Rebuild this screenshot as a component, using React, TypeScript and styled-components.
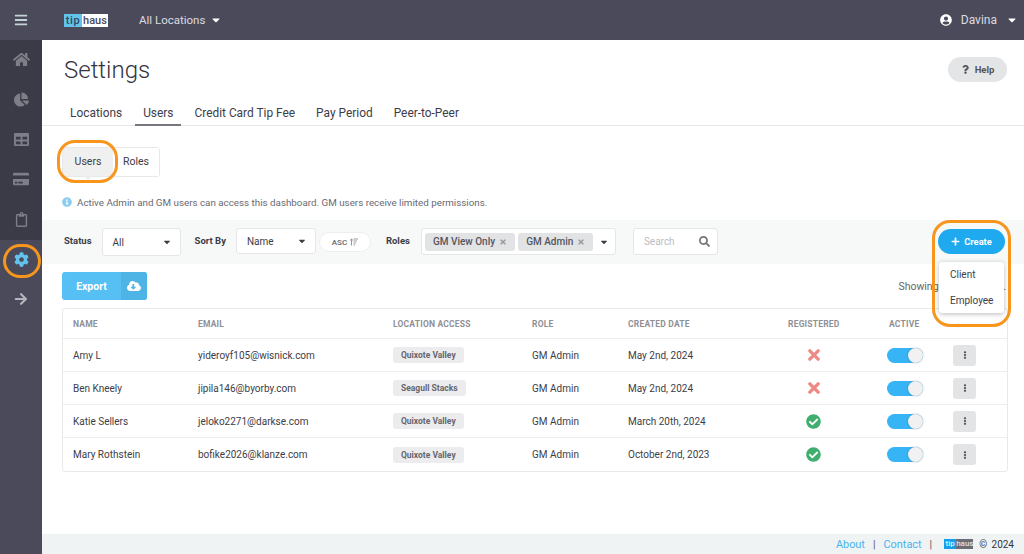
import React from "react";
import styled, { createGlobalStyle } from "styled-components";
import {
  FaArrowRight,
  FaBars,
  FaCaretDown,
  FaChartPie,
  FaCheckCircle,
  FaCloudDownloadAlt,
  FaCog,
  FaCreditCard,
  FaEllipsisV,
  FaHome,
  FaInfoCircle,
  FaPlus,
  FaQuestion,
  FaRegClipboard,
  FaSearch,
  FaSortAmountUp,
  FaTable,
  FaTimes,
  FaUserCircle,
} from "react-icons/fa";

const users = [
  { name: "Amy L", email: "yideroyf105@wisnick.com", location: "Quixote Valley", created: "May 2nd, 2024", registered: false },
  { name: "Ben Kneely", email: "jipila146@byorby.com", location: "Seagull Stacks", created: "May 2nd, 2024", registered: false },
  { name: "Katie Sellers", email: "jeloko2271@darkse.com", location: "Quixote Valley", created: "March 20th, 2024", registered: true },
  { name: "Mary Rothstein", email: "bofike2026@klanze.com", location: "Quixote Valley", created: "October 2nd, 2023", registered: true },
];

const tabs = ["Locations", "Users", "Credit Card Tip Fee", "Pay Period", "Peer-to-Peer"];

const CrossIcon = () => (
  <svg width="12" height="12" viewBox="0 0 13 13">
    <path d="M2 2 L11 11 M11 2 L2 11" stroke="#ee8a84" strokeWidth="3.6" strokeLinecap="round" />
  </svg>
);

export default function App() {
  return (
    <Page>
      <GlobalStyle />
      <TopBar>
        <MenuCell>
          <FaBars size={14} />
        </MenuCell>
        <Logo>
          <LogoTip>tip</LogoTip>
          <LogoHaus>haus</LogoHaus>
        </Logo>
        <LocationPicker>
          All Locations
          <FaCaretDown size={12} color="#fff" />
        </LocationPicker>
        <UserMenu>
          <FaUserCircle size={12} color="#fff" />
          <span>Davina</span>
          <FaCaretDown size={12} color="#fff" />
        </UserMenu>
      </TopBar>
      <Body>
        <Sidebar>
          <NavGroup>
            <NavItem><FaHome size={17} /></NavItem>
            <NavItem><FaChartPie size={15} /></NavItem>
            <NavItem><FaTable size={15} /></NavItem>
            <NavItem><FaCreditCard size={16} /></NavItem>
            <NavItem><FaRegClipboard size={15} /></NavItem>
          </NavGroup>
          <NavItem $active>
            <FaCog size={15} />
            <Highlight $top={4} $right={1} $bottom={2} $left={3} $radius={19} />
          </NavItem>
          <NavItem $bright><FaArrowRight size={14} /></NavItem>
        </Sidebar>
        <Main>
          <Header>
            <Title>Settings</Title>
            <HelpButton>
              <FaQuestion size={9} />
              Help
            </HelpButton>
          </Header>
          <Tabs>
            {tabs.map((tab) => (
              <Tab key={tab} $active={tab === "Users"}>{tab}</Tab>
            ))}
          </Tabs>
          <SubTabs>
            <SubTab $active>
              Users
              <Highlight $top={-8} $right={-5} $bottom={-7} $left={-6} $radius={18} />
            </SubTab>
            <SubTab>Roles</SubTab>
          </SubTabs>
          <InfoLine>
            <FaInfoCircle size={10} color="#8ccdf0" />
            Active Admin and GM users can access this dashboard. GM users receive limited permissions.
          </InfoLine>
          <FilterBar>
            <FilterLabel>Status</FilterLabel>
            <Select $width={79} $height={28} $ml={10}>
              All
              <FaCaretDown size={10} />
            </Select>
            <FilterLabel $ml={14}>Sort By</FilterLabel>
            <Select $width={80} $height={26} $ml={10}>
              Name
              <FaCaretDown size={10} />
            </Select>
            <SortPill>
              ASC
              <FaSortAmountUp size={8} color="#999" />
            </SortPill>
            <FilterLabel $ml={15}>Roles</FilterLabel>
            <RolesBox>
              <RoleChip>GM View Only <FaTimes size={8} color="#999" /></RoleChip>
              <RoleChip>GM Admin <FaTimes size={8} color="#999" /></RoleChip>
              <RolesCaret><FaCaretDown size={10} /></RolesCaret>
            </RolesBox>
            <SearchBox>
              Search
              <FaSearch size={11} color="#777" />
            </SearchBox>
            <CreateWrap>
              <CreateButton>
                <FaPlus size={9} />
                Create
              </CreateButton>
              <CreateMenu>
                <CreateOption>Client</CreateOption>
                <CreateOption>Employee</CreateOption>
              </CreateMenu>
              <Highlight $top={-9} $right={-6} $bottom={-73} $left={-6} $radius={18} />
            </CreateWrap>
          </FilterBar>
          <ExportRow>
            <ExportButton>
              <ExportLabel>Export</ExportLabel>
              <ExportIcon><FaCloudDownloadAlt size={14} /></ExportIcon>
            </ExportButton>
            <Showing>Showing 1 to 4 of 4.</Showing>
          </ExportRow>
          <Table>
            <HeadRow>
              <span>NAME</span>
              <span>EMAIL</span>
              <span>LOCATION ACCESS</span>
              <span>ROLE</span>
              <span>CREATED DATE</span>
              <span>REGISTERED</span>
              <span>ACTIVE</span>
            </HeadRow>
            {users.map((user) => (
              <Row key={user.email}>
                <span>{user.name}</span>
                <span>{user.email}</span>
                <span><LocationChip>{user.location}</LocationChip></span>
                <span>GM Admin</span>
                <span>{user.created}</span>
                <StatusCell>
                  {user.registered ? <FaCheckCircle size={15} color="#3fae6f" /> : <CrossIcon />}
                </StatusCell>
                <Toggle />
                <KebabButton><FaEllipsisV size={8} /></KebabButton>
              </Row>
            ))}
          </Table>
          <Footer>
            <FooterLink>About</FooterLink>
            <FooterBar>|</FooterBar>
            <FooterLink>Contact</FooterLink>
            <FooterBar>|</FooterBar>
            <FooterLogo>
              <FooterTip>tip</FooterTip>
              <FooterHaus>haus</FooterHaus>
            </FooterLogo>
            <Copyright>© 2024</Copyright>
          </Footer>
        </Main>
      </Body>
    </Page>
  );
}

const GlobalStyle = createGlobalStyle`
  html, body {
    margin: 0;
    padding: 0;
    background: #fff;
  }
  * {
    box-sizing: border-box;
  }
`;

const Page = styled.div`
  width: 1024px;
  height: 554px;
  overflow: hidden;
  display: flex;
  flex-direction: column;
  font-family: Roboto, "Liberation Sans", sans-serif;
  color: #3d3d47;
`;

const TopBar = styled.header`
  height: 40px;
  flex: none;
  display: flex;
  align-items: center;
  background: #4b4a5a;
  color: #dcdce0;
`;

const MenuCell = styled.div`
  width: 42px;
  display: flex;
  justify-content: center;
  color: #c4d4d4;
`;

const Logo = styled.div`
  margin-left: 22px;
  display: flex;
  align-items: center;
  font-size: 11px;
  font-weight: 500;
  line-height: 13px;
`;

const LogoTip = styled.span`
  width: 18px;
  text-align: center;
  background: #62c3ec;
  color: #2e4a5c;
  letter-spacing: 0.6px;
`;

const LogoHaus = styled.span`
  width: 26px;
  text-align: center;
  background: #fff;
  color: #4b4a5a;
`;

const LocationPicker = styled.div`
  margin-left: 31px;
  display: flex;
  align-items: center;
  gap: 5px;
  font-size: 11.5px;
`;

const UserMenu = styled.div`
  margin-left: auto;
  margin-right: 6px;
  display: flex;
  align-items: center;
  gap: 9px;
  font-size: 12px;
`;

const Body = styled.div`
  flex: 1;
  min-height: 0;
  display: flex;
`;

const Sidebar = styled.nav`
  width: 42px;
  flex: none;
  background: #4b4a5a;
`;

const NavGroup = styled.div`
  background: #3b3b48;
`;

const NavItem = styled.div<{ $active?: boolean; $bright?: boolean }>`
  position: relative;
  height: 40px;
  padding-bottom: 2px;
  display: flex;
  align-items: center;
  justify-content: center;
  color: ${(p) => (p.$active ? "#62c3ec" : p.$bright ? "#b4b4bc" : "#7e7e88")};
`;

const Highlight = styled.span<{ $top: number; $right: number; $bottom: number; $left: number; $radius: number }>`
  position: absolute;
  z-index: 3;
  top: ${(p) => p.$top}px;
  right: ${(p) => p.$right}px;
  bottom: ${(p) => p.$bottom}px;
  left: ${(p) => p.$left}px;
  border: 3px solid #f7951d;
  border-radius: ${(p) => p.$radius}px;
  pointer-events: none;
`;

const Main = styled.main`
  flex: 1;
  min-width: 0;
  display: flex;
  flex-direction: column;
`;

const Header = styled.div`
  height: 60px;
  flex: none;
  padding: 0 17px 0 22px;
  display: flex;
  align-items: center;
  justify-content: space-between;
`;

const Title = styled.h1`
  margin: 0;
  font-size: 24px;
  font-weight: 300;
  color: #33333d;
`;

const HelpButton = styled.div`
  width: 59px;
  height: 25px;
  margin-bottom: 2px;
  border-radius: 13px;
  background: #e4e5e7;
  color: #555;
  display: flex;
  align-items: center;
  justify-content: center;
  gap: 5px;
  font-size: 9.5px;
  font-weight: 700;
`;

const Tabs = styled.div`
  height: 26px;
  flex: none;
  padding-left: 20px;
  display: flex;
  gap: 5px;
  border-bottom: 1px solid #e6e6e6;
`;

const Tab = styled.div<{ $active?: boolean }>`
  height: 26px;
  padding: 6px 8px 0;
  font-size: 11.9px;
  color: #3d3d47;
  border-bottom: 2px solid ${(p) => (p.$active ? "#77777f" : "transparent")};
`;

const SubTabs = styled.div`
  margin: 21px 0 0 20px;
  display: flex;
  align-self: flex-start;
  border: 1px solid #e8e8e8;
  border-radius: 3px;
  height: 30px;
`;

const SubTab = styled.div<{ $active?: boolean }>`
  position: relative;
  width: ${(p) => (p.$active ? "50px" : "46px")};
  padding-bottom: 2px;
  display: flex;
  align-items: center;
  justify-content: center;
  font-size: 10.5px;
  color: #3d3d47;
  background: ${(p) => (p.$active ? "#f0f0f0" : "#fff")};

  &::after {
    content: "";
    display: ${(p) => (p.$active ? "block" : "none")};
    position: absolute;
    left: 21px;
    bottom: -4px;
    border: 4px solid transparent;
    border-bottom: 0;
    border-top-color: #ececec;
  }
`;

const InfoLine = styled.div`
  margin: 19px 0 0 20px;
  height: 12px;
  display: flex;
  align-items: center;
  gap: 5px;
  font-size: 9.8px;
  color: #6a6a72;
`;

const FilterBar = styled.div`
  margin-top: 12px;
  height: 44px;
  flex: none;
  padding: 8px 19px 0 22px;
  display: flex;
  align-items: flex-start;
  background: #f7f9f9;
`;

const FilterLabel = styled.span<{ $ml?: number }>`
  margin-left: ${(p) => p.$ml ?? 0}px;
  font-size: 9.5px;
  font-weight: 700;
  line-height: 26px;
  color: #3d3d47;
  white-space: nowrap;
`;

const Select = styled.div<{ $width: number; $height: number; $ml: number }>`
  width: ${(p) => p.$width}px;
  height: ${(p) => p.$height}px;
  margin-left: ${(p) => p.$ml}px;
  padding: 0 8px 0 10px;
  display: flex;
  align-items: center;
  justify-content: space-between;
  background: #fff;
  border: 1px solid #e6e6e6;
  border-radius: 3px;
  font-size: 10px;
  color: #3d3d47;
`;

const SortPill = styled.div`
  width: 52px;
  height: 20px;
  margin: 4px 0 0 3px;
  border: 1px solid #eee;
  border-radius: 10px;
  background: #fff;
  display: flex;
  align-items: center;
  justify-content: center;
  gap: 3px;
  font-size: 8px;
  font-weight: 500;
  color: #666;
`;

const RolesBox = styled.div`
  width: 195px;
  height: 27px;
  margin-left: 11px;
  padding: 0 3px;
  display: flex;
  align-items: center;
  gap: 3px;
  background: #fff;
  border: 1px solid #e6e6e6;
  border-radius: 3px;
`;

const RoleChip = styled.span`
  height: 18px;
  padding: 0 8px;
  display: flex;
  align-items: center;
  gap: 4px;
  background: #e2e3e5;
  border-radius: 3px;
  font-size: 10px;
  font-weight: 500;
  color: #55555d;
  white-space: nowrap;
`;

const RolesCaret = styled.span`
  margin-left: auto;
  margin-right: 3px;
  display: flex;
`;

const SearchBox = styled.div`
  width: 85px;
  height: 27px;
  margin-left: 17px;
  padding: 0 7px 0 10px;
  display: flex;
  align-items: center;
  justify-content: space-between;
  background: #fff;
  border: 1px solid #e6e6e6;
  border-radius: 3px;
  font-size: 10px;
  color: #bcbcc0;
`;

const CreateWrap = styled.div`
  position: relative;
  margin: 1px 0 0 auto;
`;

const CreateButton = styled.div`
  width: 67px;
  height: 25px;
  border-radius: 13px;
  background: #1fa9ee;
  color: #fff;
  display: flex;
  align-items: center;
  justify-content: center;
  gap: 4px;
  font-size: 9.3px;
  font-weight: 700;
`;

const CreateMenu = styled.div`
  position: absolute;
  z-index: 2;
  top: 33px;
  left: 1px;
  width: 65px;
  height: 51px;
  background: #fff;
  border-radius: 3px;
  box-shadow: 0 1px 5px rgba(0, 0, 0, 0.28);
`;

const CreateOption = styled.div`
  height: 25.5px;
  padding-left: 11px;
  display: flex;
  align-items: center;
  font-size: 10px;
  color: #3d3d47;
`;

const ExportRow = styled.div`
  margin: 8px 18px 0 20px;
  height: 28px;
  flex: none;
  display: flex;
  align-items: center;
  justify-content: space-between;
`;

const ExportButton = styled.div`
  width: 85px;
  height: 28px;
  display: flex;
  border-radius: 3px;
  overflow: hidden;
  background: #56c0f4;
  color: #fff;
`;

const ExportLabel = styled.span`
  flex: 1;
  display: flex;
  align-items: center;
  justify-content: center;
  font-size: 10.5px;
  font-weight: 700;
`;

const ExportIcon = styled.span`
  width: 26px;
  display: flex;
  align-items: center;
  justify-content: center;
  background: #4eb4e6;
`;

const Showing = styled.span`
  font-size: 10.5px;
  word-spacing: 3px;
  color: #666;
`;

const Table = styled.div`
  margin: 8px 16px 0 20px;
  border: 1px solid #e9e9e9;
  border-radius: 3px;
`;

const columns = "125px 195px 139px 96px 160px 101px 64px 32px";

const HeadRow = styled.div`
  height: 30px;
  padding-left: 10px;
  display: grid;
  grid-template-columns: ${columns};
  align-items: center;
  font-size: 8.5px;
  font-weight: 700;
  letter-spacing: 0.2px;
  color: #8f8f96;
  border-bottom: 1px solid #eee;
`;

const Row = styled.div`
  height: 33px;
  padding-left: 10px;
  display: grid;
  grid-template-columns: ${columns};
  align-items: center;
  font-size: 10px;
  color: #3d3d47;
  border-bottom: 1px solid #eee;

  &:last-child {
    border-bottom: 0;
  }
`;

const LocationChip = styled.span`
  display: inline-block;
  padding: 3px 8px;
  background: #ececee;
  border-radius: 3px;
  font-size: 8.5px;
  font-weight: 700;
  line-height: 10px;
  color: #66666e;
`;

const StatusCell = styled.span`
  width: 51px;
  display: flex;
  justify-content: center;
`;

const Toggle = styled.span`
  position: relative;
  width: 36px;
  height: 15px;
  margin-left: -2px;
  border-radius: 8px;
  background: #36b4f5;

  &::after {
    content: "";
    position: absolute;
    right: 0;
    top: 0;
    width: 15px;
    height: 15px;
    border-radius: 50%;
    background: #f1f1f1;
    box-shadow: 0 0 2px rgba(0, 0, 0, 0.3);
  }
`;

const KebabButton = styled.span`
  width: 23px;
  height: 21px;
  border-radius: 3px;
  background: #e3e4e6;
  color: #55555d;
  display: flex;
  align-items: center;
  justify-content: center;
`;

const Footer = styled.footer`
  margin-top: auto;
  height: 20px;
  flex: none;
  padding-right: 10px;
  display: flex;
  align-items: center;
  justify-content: flex-end;
  background: #eff3f4;
  font-size: 10.9px;
`;

const FooterLink = styled.span`
  color: #47b3ee;
`;

const FooterBar = styled.span`
  margin: 0 8px;
  color: #55555d;
  font-size: 10.5px;
`;

const FooterLogo = styled.span`
  margin-left: 4px;
  display: flex;
  font-size: 8px;
  font-weight: 500;
  line-height: 10px;
`;

const FooterTip = styled.span`
  width: 12px;
  text-align: center;
  background: #14a0ea;
  color: #dff3ff;
`;

const FooterHaus = styled.span`
  width: 17px;
  text-align: center;
  background: #6c6c74;
  color: #e0e0e0;
`;

const Copyright = styled.span`
  margin-left: 6px;
  font-size: 10px;
  word-spacing: 2px;
  color: #33333d;
`;
